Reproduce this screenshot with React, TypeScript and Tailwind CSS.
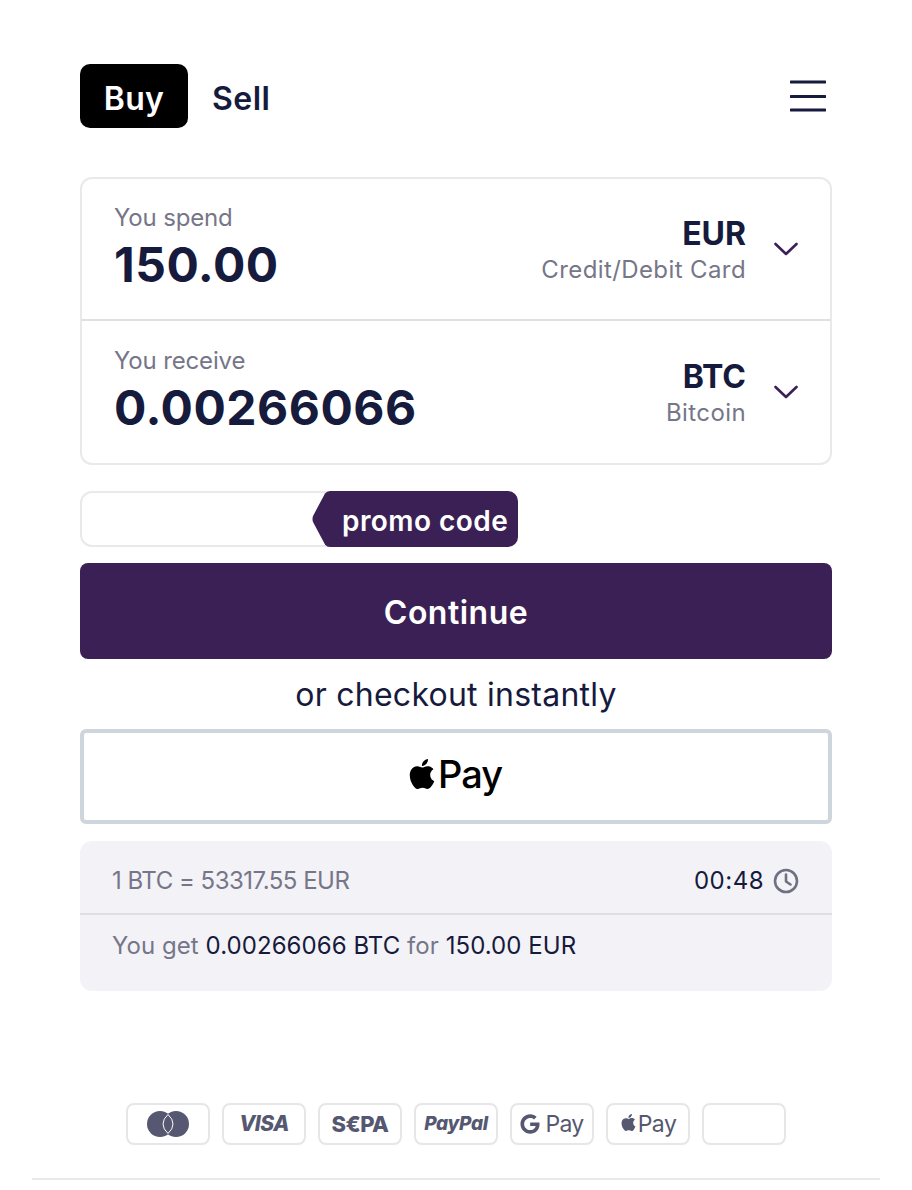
import { SiApple } from "react-icons/si";
import { FaGoogle } from "react-icons/fa";

const font = { fontFamily: "Inter, 'Noto Sans', sans-serif" };

function Chevron() {
  return (
    <svg width="24" height="14" viewBox="0 0 24 14" fill="none" className="shrink-0">
      <path d="M1.5 2 L12 12 L22.5 2" stroke="#3b2056" strokeWidth="2.6" strokeLinecap="round" strokeLinejoin="round" />
    </svg>
  );
}

function ExchangeRow({
  label,
  amount,
  code,
  name,
  divider,
}: {
  label: string;
  amount: string;
  code: string;
  name: string;
  divider?: boolean;
}) {
  return (
    <div className={`flex h-[142px] items-center pr-[31px] pl-[32px] ${divider ? "border-b-2 border-[#dfe0e3]" : ""}`}>
      <div className="-mt-[1px] flex-1">
        <div className="text-[24px] leading-[30px] tracking-[-0.15px] text-[#767689]">{label}</div>
        <div className="mt-[3px] text-[48px] leading-[58px] font-bold tracking-[0.5px] text-[#161a3c]">{amount}</div>
      </div>
      <div className="pt-[2px] text-right">
        <div className="text-[32px] leading-[38px] font-bold text-[#161a3c]">{code}</div>
        <div className="mt-[2px] text-[24px] leading-[30px] tracking-[0.4px] text-[#767689]">{name}</div>
      </div>
      <div className="ml-[28px] pr-[1px]">
        <Chevron />
      </div>
    </div>
  );
}

function PayBadge({ children }: { children?: React.ReactNode }) {
  return (
    <div className="flex h-[42px] w-[84px] items-center justify-center rounded-[8px] border-2 border-[#e6e6e8] text-[#555870]">
      {children}
    </div>
  );
}

export default function App() {
  return (
    <div style={font} className="h-[1190px] w-[912px] overflow-hidden bg-white">
      <div className="px-[80px] pt-[64px]">
        <div className="flex h-[64px] items-center">
          <div className="flex h-[64px] w-[108px] items-center justify-center rounded-[10px] bg-black pt-[5px] text-[32px] font-semibold tracking-[0.3px] text-white">
            Buy
          </div>
          <div className="ml-[24px] flex-1 pt-[5px] text-[32px] font-semibold tracking-[0.5px] text-[#161a3c]">Sell</div>
          <svg width="36" height="32" viewBox="0 0 36 32" fill="none" className="-mr-[-6px]">
            <path d="M1 2h34M1 16.500h34M1 30h34" stroke="#161a3c" strokeWidth="3" strokeLinecap="round" />
          </svg>
        </div>

        <div className="mt-[49px] rounded-[12px] border-2 border-[#e9e9eb]">
          <ExchangeRow label="You spend" amount="150.00" code="EUR" name="Credit/Debit Card" divider />
          <ExchangeRow label="You receive" amount="0.00266066" code="BTC" name="Bitcoin" />
        </div>

        <div className="relative mt-[26px] h-[56px] w-[260px] rounded-[12px] border-2 border-[#e9e9eb]">
          <div className="absolute top-[-2px] left-[230px] flex h-[56px] w-[206px]">
            <svg width="20" height="56" viewBox="0 0 20 56" className="shrink-0">
              <path d="M20 0H18Q15 0 13 2.500L1 25Q0 28 1 31L13 53.500Q15 56 18 56H20Z" fill="#3b2056" />
            </svg>
            <div className="flex flex-1 items-center rounded-r-[10px] bg-[#3b2056] pt-[4px] pl-[10px] text-[28px] font-semibold tracking-[0.45px] text-white">
              promo code
            </div>
          </div>
        </div>

        <button className="mt-[16px] flex h-[96px] w-full items-center justify-center rounded-[8px] bg-[#3b2056] pt-[3px] text-[32px] font-semibold tracking-[0.5px] text-white">
          Continue
        </button>

        <div className="mt-[16px] text-center text-[32px] leading-[40px] tracking-[0.25px] text-[#161a3c]">
          or checkout instantly
        </div>

        <div className="mt-[14px] flex h-[95px] items-center justify-center rounded-[6px] border-4 border-[#ced5dc] pr-[3px] text-black">
          <SiApple className="mb-[6px] h-[36px] w-[30px]" />
          <span className="-mt-[4px] ml-[1px] text-[38px] font-medium tracking-[-1px]">Pay</span>
        </div>

        <div className="mt-[17px] h-[150px] rounded-[12px] bg-[#f3f2f7] text-[24px]">
          <div className="flex h-[74px] items-center border-b-2 border-[#dfdee5] pt-[7px] pr-[33px] pl-[32px]">
            <div className="flex-1 tracking-[-0.5px] text-[#767689]">1 BTC = 53317.55 EUR</div>
            <div className="tracking-[0.5px] text-[#161a3c]">00:48</div>
            <svg width="26" height="26" viewBox="0 0 26 26" fill="none" className="ml-[9px]">
              <circle cx="13" cy="13" r="11" stroke="#6f7183" strokeWidth="2.6" />
              <path d="M13 6.500V13.500L17.500 16.500" stroke="#6f7183" strokeWidth="2.6" strokeLinecap="round" strokeLinejoin="round" />
            </svg>
          </div>
          <div className="pt-[15px] pl-[32px] leading-[32px] tracking-[0.06px] text-[#767689]">
            You get <span className="text-[#161a3c]">0.00266066 BTC</span> for{" "}
            <span className="text-[#161a3c]">150.00 EUR</span>
          </div>
        </div>

        <div className="mt-[112px] flex justify-center gap-[12px]">
          <PayBadge>
            <svg width="42" height="26" viewBox="0 0 42 26">
              <circle cx="13" cy="13" r="13" fill="#555870" />
              <circle cx="29" cy="13" r="13" fill="#555870" />
              <path d="M21 3.500Q26 8 26 13T21 22.500Q16 18 16 13T21 3.500Z" fill="#555870" stroke="#fff" strokeWidth="1" />
            </svg>
          </PayBadge>
          <PayBadge>
            <span className="text-[21px] font-extrabold tracking-[-0.5px] italic">VISA</span>
          </PayBadge>
          <PayBadge>
            <span className="text-[22px] font-extrabold tracking-[-0.5px]">S€PA</span>
          </PayBadge>
          <PayBadge>
            <span className="text-[19px] font-extrabold tracking-[-0.3px] italic">PayPal</span>
          </PayBadge>
          <PayBadge>
            <FaGoogle className="h-[20px] w-[20px]" />
            <span className="ml-[5px] text-[23px] tracking-[-0.7px]">Pay</span>
          </PayBadge>
          <PayBadge>
            <SiApple className="mb-[3px] h-[19px] w-[17px]" />
            <span className="ml-[1px] text-[23px] tracking-[-0.5px]">Pay</span>
          </PayBadge>
          <PayBadge />
        </div>
      </div>

      <div className="mx-[32px] mt-[33px] border-t-2 border-[#e9e9eb]" />
    </div>
  );
}
